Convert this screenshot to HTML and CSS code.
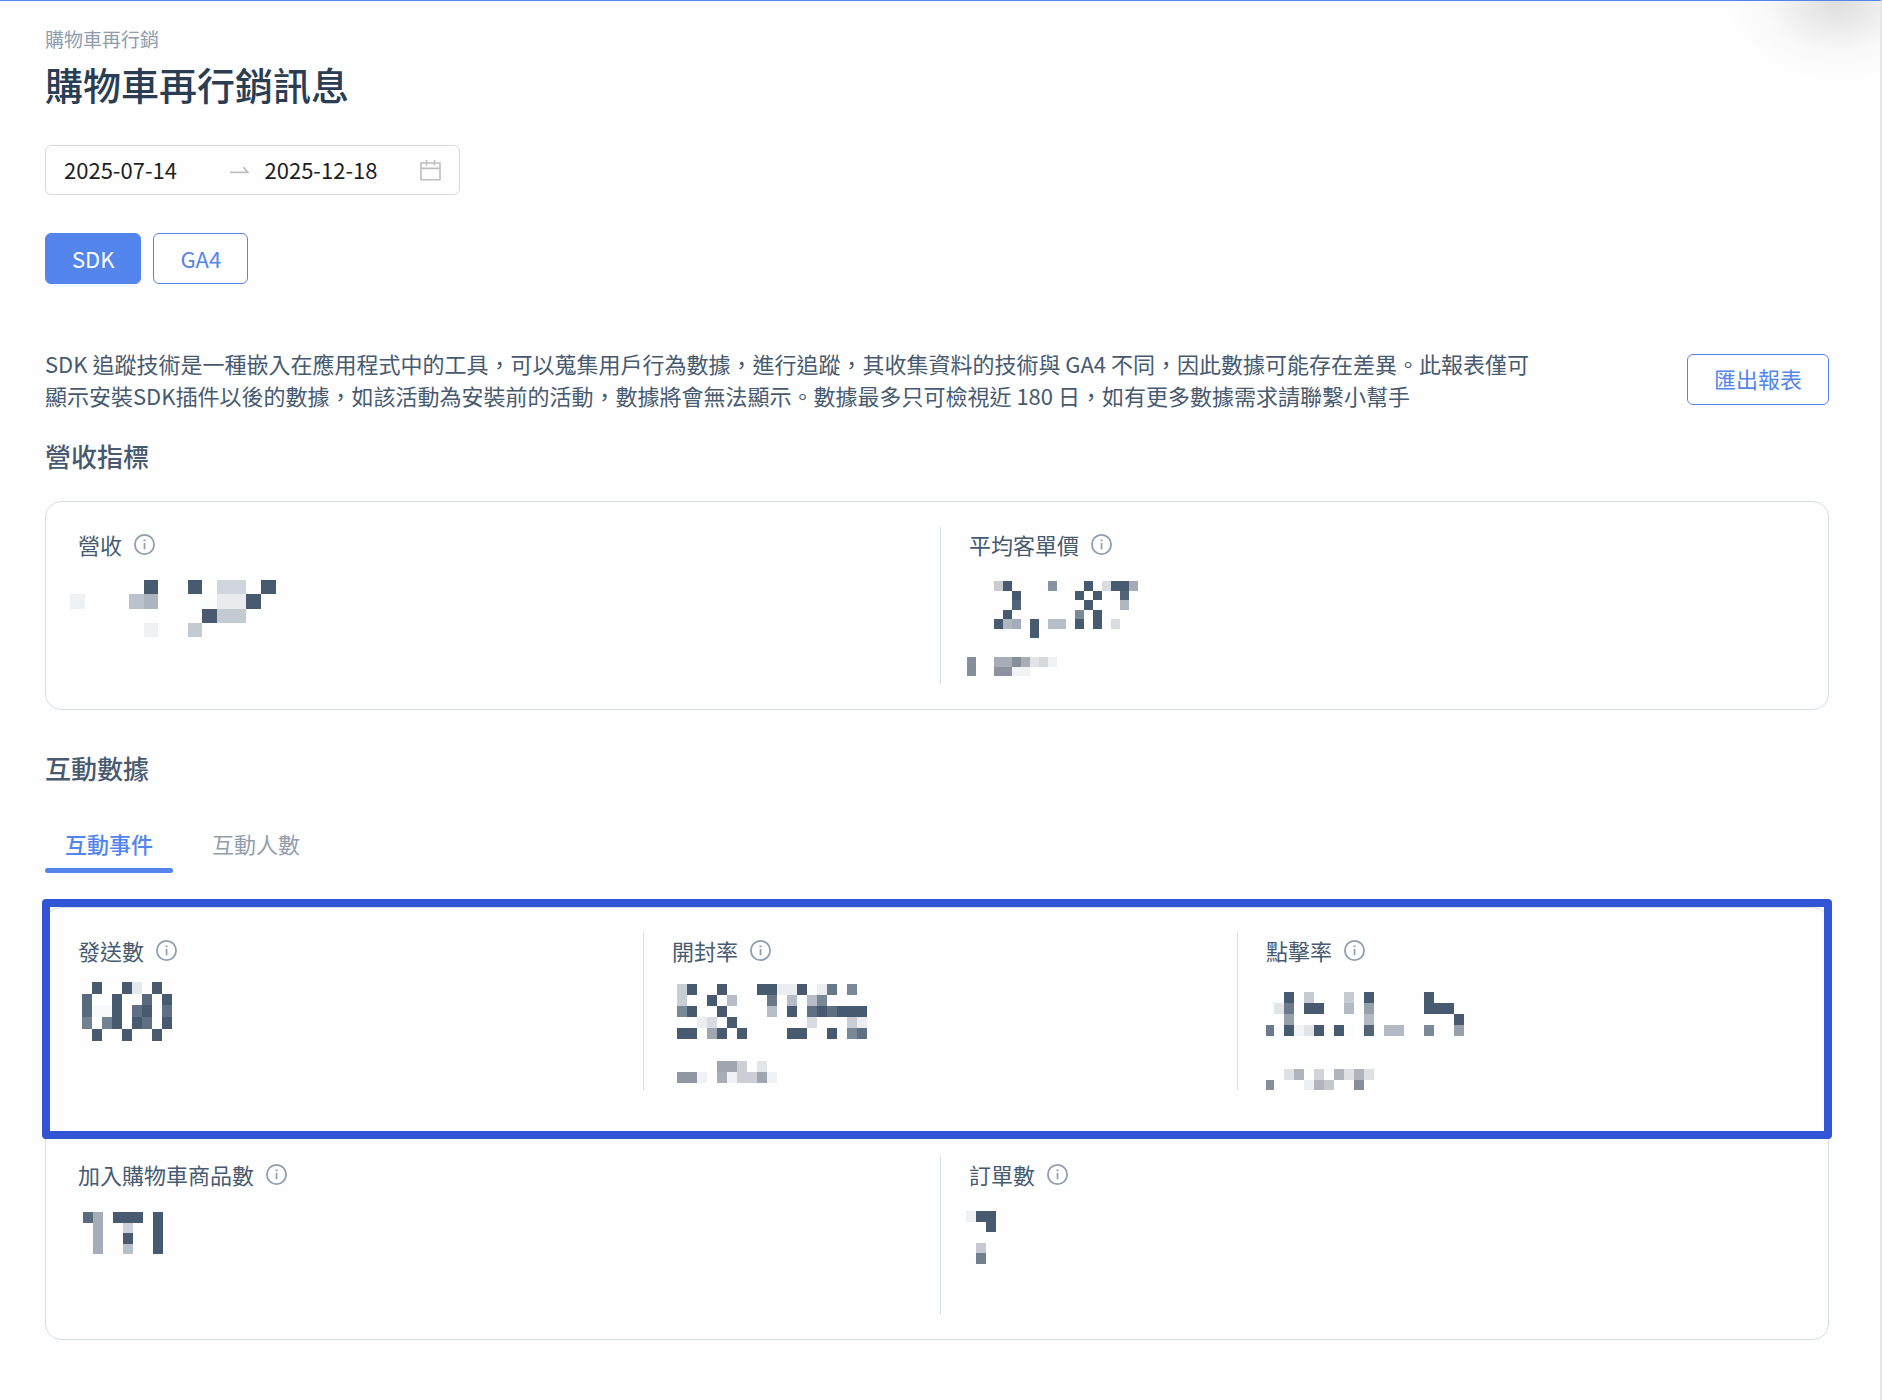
FILE: index.html
```html
<!DOCTYPE html>
<html lang="zh-Hant">
<head>
  <meta charset="UTF-8">
  <meta name="viewport" content="width=device-width, initial-scale=1.0">
  <title>購物車再行銷訊息</title>
  <link rel="stylesheet" href="styles.css">
</head>
<body>
  <svg class="sprite" aria-hidden="true">
    <symbol id="info" viewBox="0 0 21 21">
      <circle cx="10.5" cy="10.5" r="9.6" fill="none" stroke="currentColor" stroke-width="1.8"/>
      <path d="M9.7 9h1.7v6.2H9.7zM9.5 5.6h2v1.6h-2z" fill="currentColor"/>
    </symbol>
  </svg>
  <div class="corner-shadow"></div>
  <main class="page">
    <p class="breadcrumb">購物車再行銷</p>
    <h1 class="title">購物車再行銷訊息</h1>

    <div class="range-picker">
      <input type="text" value="2025-07-14" aria-label="開始日期">
      <svg class="arrow" viewBox="0 0 19 8" aria-hidden="true"><path d="M0 6.4h18L13.2 1" fill="none" stroke="currentColor" stroke-width="1.8"/></svg>
      <input type="text" value="2025-12-18" aria-label="結束日期">
      <svg class="calendar" viewBox="0 0 21 21" aria-hidden="true"><path d="M1 3h19v16.7H1zM1 8.4h19M6.5 0v5.5M14.5 0v5.5" fill="none" stroke="currentColor" stroke-width="1.6"/></svg>
    </div>

    <div class="source">
      <button type="button" class="btn primary">SDK</button>
      <button type="button" class="btn">GA4</button>
    </div>

    <div class="intro">
      <p>SDK 追蹤技術是一種嵌入在應用程式中的工具，可以蒐集用戶行為數據，進行追蹤，其收集資料的技術與 GA4 不同，因此數據可能存在差異。此報表僅可顯示安裝SDK插件以後的數據，如該活動為安裝前的活動，數據將會無法顯示。數據最多只可檢視近 180 日，如有更多數據需求請聯繫小幫手</p>
      <button type="button" class="btn">匯出報表</button>
    </div>

    <h2 class="section-title">營收指標</h2>
    <section class="card">
      <div class="row">
        <div class="cell">
          <p class="label">營收 <svg class="info"><use href="#info"/></svg></p>
          <svg class="value" viewBox="0 0 240 112">
            <g transform="translate(4 8) scale(14.7 14.25)">
              <path d="M5 0h1v1h-1zM8 0h1v1h-1zM13 0h1v1h-1zM12 1h1v1h-1zM9 2h1v1h-1z"/>
              <path fill="#d1d6de" d="M10 0h2v1h-2z"/>
              <path fill="#eff1f3" d="M0 1h1v1h-1zM5 3h1v1h-1z"/>
              <path fill="#bcc2cb" d="M4 1h1v1h-1z"/>
              <path fill="#adb4be" d="M5 1h1v1h-1z"/>
              <path fill="#fbfcfc" d="M9 1h1v1h-1z"/>
              <path fill="#e9ebee" d="M10 1h2v1h-2z"/>
              <path fill="#c3cad2" d="M10 2h2v1h-2zM8 3h1v1h-1z"/>
            </g>
          </svg>
        </div>
        <div class="cell">
          <p class="label">平均客單價 <svg class="info"><use href="#info"/></svg></p>
          <svg class="value" viewBox="0 0 240 112">
            <g transform="translate(10 9) scale(9 9.5)">
              <path d="M4 0h1v1h-1zM13 0h1v1h-1zM16 0h2v1h-2zM5 1h1v1h-1zM12 1h1v1h-1zM14 1h1v1h-1zM13 2h1v1h-1zM4 3h1v1h-1zM14 3h1v2h-1zM3 4h1v1h-1zM7 4h1v2h-1zM12 4h1v1h-1z"/>
              <path fill="#526477" d="M17 1h1v1h-1zM5 2h1v1h-1z"/>
              <path fill="#c8cdd2" d="M3 0h1v1h-1z"/>
              <path fill="#8892a1" d="M9 0h1v1h-1z"/>
              <path fill="#d9dde2" d="M15 0h1v1h-1zM16 4h1v1h-1z"/>
              <path fill="#a4acb7" d="M18 0h1v1h-1zM5 4h1v1h-1z"/>
              <path fill="#afb7c0" d="M17 2h1v1h-1zM4 4h1v1h-1z"/>
              <path fill="#7a8a98" d="M12 3h1v1h-1z"/>
              <path fill="#b6bec8" d="M9 4h2v1h-2z"/>
              <path fill="#868e9b" d="M0 8h1v2h-1zM5 8h1v1h-1z"/>
              <path fill="#a9adb6" d="M3 8h2v1h-2zM6 8h1v1h-1z"/>
              <path fill="#8e919f" d="M3 9h2v1h-2z"/>
              <path fill="#e2e3e7" d="M7 8h1v1h-1z"/>
              <path fill="#d7d8dd" d="M8 8h1v1h-1z"/>
              <path fill="#f1f2f4" d="M9 8h1v1h-1zM5 9h2v1h-2z"/>
            </g>
          </svg>
        </div>
      </div>
    </section>

    <h2 class="section-title">互動數據</h2>
    <div class="tabs" role="tablist">
      <button type="button" class="tab active" role="tab" aria-selected="true">互動事件</button>
      <button type="button" class="tab" role="tab" aria-selected="false">互動人數</button>
    </div>
    <section class="card">
      <div class="highlight"></div>
      <div class="row">
        <div class="cell">
          <p class="label">發送數 <svg class="info"><use href="#info"/></svg></p>
          <svg class="value" viewBox="0 0 240 112">
            <g transform="translate(16 4) scale(10 11.7)">
              <path d="M1 0h1v1h-1zM4 0h1v1h-1zM7 0h1v1h-1zM3 1h1v3h-1zM8 1h1v1h-1zM6 2h1v1h-1zM5 3h1v1h-1zM8 3h1v1h-1zM1 4h1v1h-1zM4 4h1v1h-1zM7 4h1v1h-1z"/>
              <path fill="#e5e9ed" d="M5 0h1v1h-1z"/>
              <path fill="#586a7d" d="M0 1h1v2h-1zM6 1h1v1h-1z"/>
              <path fill="#f8f9fa" d="M1 2h2v1h-2z"/>
              <path fill="#607084" d="M5 2h1v1h-1zM8 2h1v1h-1zM6 3h1v1h-1z"/>
              <path fill="#728292" d="M0 3h1v1h-1zM2 3h1v1h-1z"/>
            </g>
          </svg>
        </div>
        <div class="cell">
          <p class="label">開封率 <svg class="info"><use href="#info"/></svg></p>
          <svg class="value" viewBox="0 0 240 112">
            <g transform="translate(17 6) scale(10 11)">
              <path d="M1 0h1v1h-1zM4 0h1v1h-1zM8 0h2v1h-2zM12 0h1v1h-1zM3 1h1v1h-1zM1 2h1v1h-1zM4 2h1v1h-1zM11 2h1v1h-1zM14 2h1v1h-1zM16 2h3v1h-3zM5 3h1v1h-1zM0 4h2v1h-2zM4 4h1v1h-1zM6 4h1v1h-1zM11 4h2v1h-2zM15 4h1v1h-1z"/>
              <path fill="#c8cdd6" d="M0 0h1v2h-1zM17 3h1v1h-1z"/>
              <path fill="#ebedf0" d="M10 0h2v1h-2zM14 0h1v1h-1zM2 3h1v1h-1zM18 3h1v1h-1z"/>
              <path fill="#687889" d="M15 0h1v1h-1zM9 1h1v1h-1z"/>
              <path fill="#788896" d="M17 0h1v1h-1zM0 2h1v1h-1zM14 1h1v1h-1zM17 4h1v1h-1z"/>
              <path fill="#b6bdc6" d="M5 1h1v1h-1zM13 1h1v1h-1zM11 1h1v1h-1zM9 2h1v1h-1z"/>
              <path fill="#5f7082" d="M13 2h1v1h-1zM15 2h1v1h-1zM18 4h1v1h-1z"/>
              <path fill="#d8dce2" d="M3 3h1v1h-1zM13 3h1v1h-1z"/>
              <path fill="#9fa6b0" d="M3 4h1v1h-1zM4 7h2v1h-2zM8 8h1v1h-1z"/>
              <path fill="#cccfd5" d="M6 7h1v2h-1zM7 8h1v1h-1z"/>
              <path fill="#e3e5e8" d="M8 7h1v1h-1z"/>
              <path fill="#9296a3" d="M0 8h2v1h-2z"/>
              <path fill="#a9adb7" d="M4 8h1v1h-1z"/>
              <path fill="#f1f2f4" d="M2 8h1v1h-1zM5 8h1v1h-1zM9 8h1v1h-1z"/>
            </g>
          </svg>
        </div>
        <div class="cell">
          <p class="label">點擊率 <svg class="info"><use href="#info"/></svg></p>
          <svg class="value" viewBox="0 0 240 112">
            <g transform="translate(10 14) scale(10 11)">
              <path d="M2 0h1v1h-1zM10 0h1v1h-1zM16 0h1v1h-1zM4 1h2v1h-2zM16 1h3v1h-3zM19 2h1v1h-1zM2 3h1v1h-1zM5 3h1v1h-1zM7 3h1v1h-1z"/>
              <path fill="#c6cad2" d="M4 0h1v1h-1zM8 0h1v1h-1z"/>
              <path fill="#e1e5e8" d="M1 1h1v1h-1zM4 3h1v1h-1z"/>
              <path fill="#6c7a8b" d="M2 1h1v1h-1zM.2 3h.8v1h-.8z"/>
              <path fill="#b4bac4" d="M8 1h1v1h-1zM10 2h1v1h-1zM12 3h2v1h-2z"/>
              <path fill="#97a1ac" d="M10 1h1v1h-1zM2 2h1v1h-1zM19 3h1v1h-1z"/>
              <path fill="#f3f4f6" d="M3 3h1v1h-1z"/>
              <path fill="#fbfcfc" d="M8 3h1v1h-1z"/>
              <path fill="#526477" d="M10 3h1v1h-1z"/>
              <path fill="#7c8a97" d="M16 3h1v1h-1z"/>
              <path fill="#dfe0e4" d="M2 7h1v1h-1zM8 7h1v1h-1zM10 7h1v1h-1z"/>
              <path fill="#b1b4bc" d="M3 7h1v1h-1zM7 7h1v1h-1zM9 7h1v1h-1zM5 8h1v1h-1z"/>
              <path fill="#d2d4d8" d="M5 7h1v1h-1z"/>
              <path fill="#c5c8cd" d="M6 8h1v1h-1z"/>
              <path fill="#eeeff1" d="M4 8h1v1h-1z"/>
              <path fill="#888f9c" d="M.2 8h.8v1h-.8zM9 8h1v1h-1z"/>
            </g>
          </svg>
        </div>
      </div>
      <div class="row">
        <div class="cell">
          <p class="label">加入購物車商品數 <svg class="info"><use href="#info"/></svg></p>
          <svg class="value" viewBox="0 0 240 112">
            <g transform="translate(17 10) scale(10 10.5)">
              <path d="M3 0h3v1h-3zM4 2h1v1h-1zM7 0h1v4h-1z"/>
              <path fill="#5a6a7d" d="M0 0h1v1h-1z"/>
              <path fill="#a6adb8" d="M1 0h1v4h-1z"/>
              <path fill="#ced2da" d="M4 1h1v1h-1z"/>
              <path fill="#b7bfc7" d="M4 3h1v1h-1z"/>
            </g>
          </svg>
        </div>
        <div class="cell">
          <p class="label">訂單數 <svg class="info"><use href="#info"/></svg></p>
          <svg class="value" viewBox="0 0 240 112">
            <g transform="translate(9 9) scale(10 10.5)">
              <path d="M1 0h2v2h-1v-1h-1z"/>
              <path fill="#f0f1f3" d="M0 0h1v1h-1z"/>
              <path fill="#c5cad2" d="M1 3h1v1h-1z"/>
              <path fill="#70808f" d="M1 4h1v1h-1z"/>
            </g>
          </svg>
        </div>
      </div>
    </section>
  </main>
</body>
</html>
```

FILE: styles.css
```css
* {
  box-sizing: border-box;
  margin: 0;
  padding: 0;
}
body {
  position: relative;
  min-height: 100vh;
  overflow-x: hidden;
  border-top: 1px solid #5485ec;
  border-right: 2px solid #e6e6e6;
  background: #fefefe;
  color: #475a6f;
  font-family: "Noto Sans CJK TC", "Noto Sans", sans-serif;
  font-size: 22px;
  line-height: 32px;
}
button,
input {
  font: inherit;
}
.sprite {
  position: absolute;
  width: 0;
  height: 0;
}
.corner-shadow {
  position: absolute;
  top: 0;
  right: 0;
  width: 162px;
  height: 84px;
  background: radial-gradient(112px 80px at 120px 0, rgba(0, 0, 0, 0.13), rgba(0, 0, 0, 0.08) 30%, rgba(0, 0, 0, 0.02) 65%, transparent);
}
.page {
  padding: 24px 51px 60px 45px;
}
.breadcrumb {
  color: #8f9dac;
  font-size: 19px;
  line-height: 28px;
}
.title {
  margin-top: 4px;
  color: #2a3d53;
  font-size: 38px;
  font-weight: 500;
  line-height: 54px;
}

/* date range */
.range-picker {
  display: flex;
  align-items: center;
  width: 415px;
  height: 50px;
  margin-top: 34px;
  padding: 0 18px;
  border: 1px solid #d9d9d9;
  border-radius: 6px;
  color: #bfbfbf;
}
.range-picker input {
  flex: 1;
  min-width: 0;
  padding-bottom: 2px;
  border: 0;
  outline: 0;
  background: none;
  color: #1f1f1f;
}
.range-picker .arrow {
  width: 19px;
  height: 8px;
  margin: 0 16px 0 10px;
}
.range-picker .calendar {
  width: 21px;
  height: 21px;
}

.btn {
  flex: none;
  height: 51px;
  padding: 0 26px 2px;
  border: 1px solid #5485ec;
  border-radius: 6px;
  background: #fff;
  color: #5485ec;
}
.btn.primary {
  background: #5485ec;
  color: #fff;
  box-shadow: 0 3px 0 #f3f8fe;
}
.source {
  display: flex;
  gap: 12px;
  margin-top: 38px;
}
.intro {
  display: flex;
  align-items: center;
  justify-content: space-between;
  gap: 150px;
  margin-top: 63px;
}
.section-title {
  margin-top: 25px;
  font-size: 26px;
  font-weight: 500;
  line-height: 40px;
}

/* metric cards */
.card {
  position: relative;
  display: flex;
  flex-direction: column;
  gap: 67px;
  margin-top: 25px;
  padding: 25px 32px;
  border: 1px solid #d7dde5;
  border-radius: 16px;
}
.card + .section-title {
  margin-top: 38px;
}
.row {
  display: flex;
  gap: 64px;
}
.cell {
  flex: 1;
  min-width: 0;
  padding-top: 1px;
}
.cell + .cell {
  margin-left: -29px;
  padding-left: 28px;
  border-left: 1px solid #d7dde5;
}
.label {
  display: flex;
  align-items: center;
  gap: 12px;
}
.info {
  width: 21px;
  height: 21px;
  color: #8f9eb0;
}
.value {
  display: block;
  width: 240px;
  height: 112px;
  margin: 12px 0 0 -12px;
  fill: #475a6f;
  shape-rendering: crispEdges;
}
.highlight {
  position: absolute;
  top: -9px;
  left: -4px;
  right: -4px;
  height: 240px;
  border: 8px solid #3155d3;
  border-radius: 4px;
}

.tabs {
  display: flex;
  gap: 19px;
  margin-top: 39px;
}
.tab {
  padding: 0 20px;
  border: 0;
  background: none;
  color: #929eac;
}
.tab.active {
  color: #5485ec;
  font-weight: 500;
}
.tab::after {
  content: '';
  display: block;
  height: 5px;
  margin: 9px -20px 0;
  border-radius: 3px;
}
.tab.active::after {
  background: #5485ec;
}
.tabs + .card {
  margin-top: 34px;
}
```
